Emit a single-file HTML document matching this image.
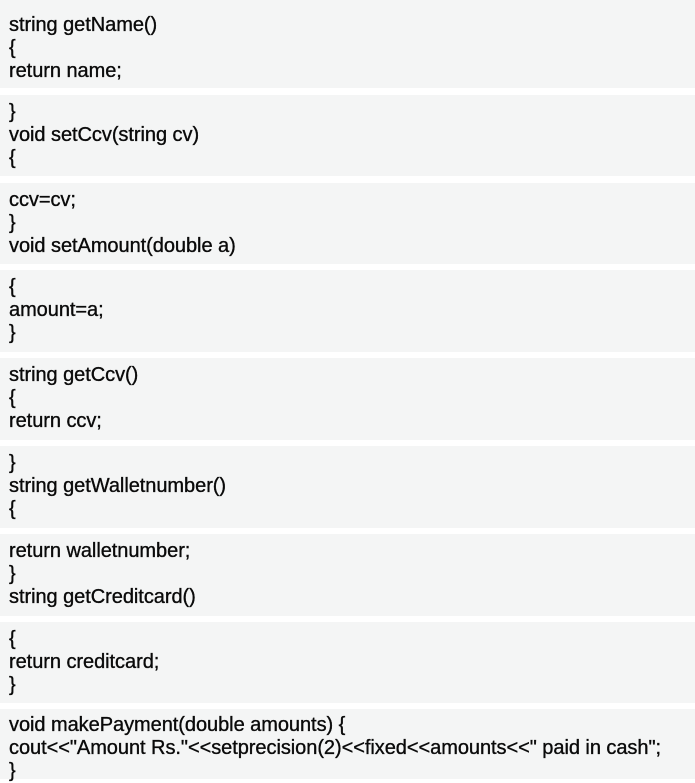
<!DOCTYPE html>
<html><head><meta charset="utf-8"><style>
body{margin:0;background:#fff;width:695px;height:775px;overflow:hidden;position:relative;font-family:"Liberation Sans",sans-serif;}
.b{position:absolute;left:0;width:695px;background:#f4f5f5;box-sizing:border-box;padding-left:9px;color:#0a0a0a;font-size:20px;line-height:23px;letter-spacing:-0.05px;white-space:pre;-webkit-text-stroke:0.35px #0a0a0a;}
</style></head><body>
<div class="b" style="top:0;height:88px;padding-top:14px">string getName()
{
return name;</div>
<div class="b" style="top:95px;height:81px;padding-top:6px">}
void setCcv(string cv)
{</div>
<div class="b" style="top:183px;height:81px;padding-top:6px">ccv=cv;
}
void setAmount(double a)</div>
<div class="b" style="top:270px;height:82px;padding-top:6px">{
amount=a;
}</div>
<div class="b" style="top:358px;height:82px;padding-top:6px">string getCcv()
{
return ccv;</div>
<div class="b" style="top:446px;height:82px;padding-top:6px">}
string getWalletnumber()
{</div>
<div class="b" style="top:534px;height:82px;padding-top:6px">return walletnumber;
}
string getCreditcard()</div>
<div class="b" style="top:622px;height:81px;padding-top:6px">{
return creditcard;
}</div>
<div class="b" style="top:709px;height:70px;padding-top:5px">void makePayment(double amounts) {
cout&lt;&lt;"Amount Rs."&lt;&lt;setprecision(2)&lt;&lt;fixed&lt;&lt;amounts&lt;&lt;" paid in cash";
}</div>
</body></html>
